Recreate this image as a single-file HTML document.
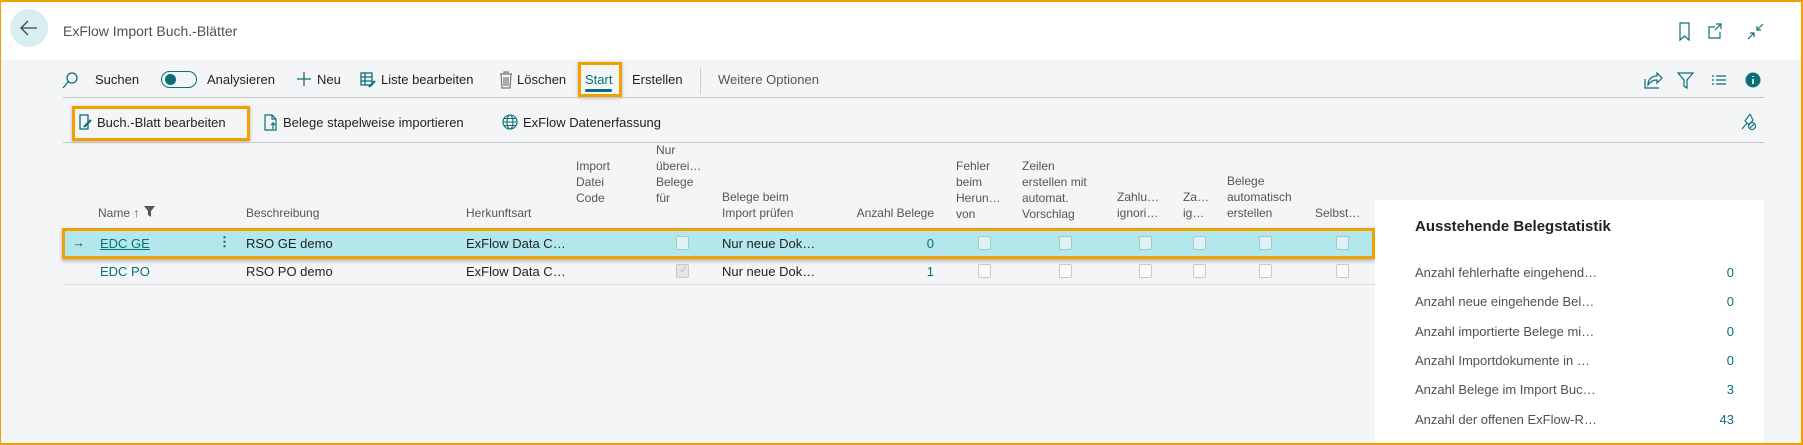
<!DOCTYPE html>
<html><head><meta charset="utf-8"><style>
*{margin:0;padding:0;box-sizing:border-box}
body{width:1803px;height:445px;overflow:hidden;background:#f4f5f7;font-family:"Liberation Sans",sans-serif;font-size:13px;color:#222;position:relative}
.a{position:absolute;white-space:nowrap}
.t{color:#0b6f78}
.h{color:#555;font-size:12px;line-height:16px}
.cb{position:absolute;width:13px;height:14px;border:1px solid #c8c8c8;border-radius:2px;background:#fafafa}
.r1 .cb{background:#dcf2f4;border-color:#a8c9cc}
svg{position:absolute}
</style></head><body>
<div class="a" style="left:0;top:0;width:1803px;height:60px;background:#fff"></div>
<div class="a" style="left:10px;top:9px;width:38px;height:38px;border-radius:50%;background:#d9eef0"></div>
<svg style="left:19px;top:19px" width="20" height="18" viewBox="0 0 20 18"><path d="M18 9H3M9 2L2 9l7 7" fill="none" stroke="#444" stroke-width="1.3"/></svg>
<div class="a" style="left:63px;top:23px;font-size:14px;color:#505050">ExFlow Import Buch.-Blätter</div>
<svg style="left:1678px;top:22px" width="90" height="20" viewBox="0 0 90 20" fill="none" stroke="#0b6f78" stroke-width="1.2"><path d="M2 1h9v17l-4.5-4L2 18z"/><path d="M37 5h-6v11h11v-6M38 2h5v5M43 2l-6 6"/><path d="M70 17l6-6M72 11h4v4M85 2l-6 6M79 4v4h4"/></svg>

<svg style="left:62px;top:71px" width="16" height="18" viewBox="0 0 16 18" fill="none" stroke="#0b6f78" stroke-width="1.3"><circle cx="10" cy="7" r="5"/><path d="M6 11l-5 6"/></svg>
<div class="a" style="left:95px;top:72px">Suchen</div>
<div class="a" style="left:161px;top:71px;width:36px;height:17px;border:1.5px solid #0b6f78;border-radius:9px"></div>
<div class="a" style="left:165px;top:74px;width:11px;height:11px;border-radius:50%;background:#0b6f78"></div>
<div class="a" style="left:207px;top:72px">Analysieren</div>
<svg style="left:296px;top:71px" width="16" height="16"><path d="M8 1v14M1 8h14" stroke="#0b6f78" stroke-width="1.3"/></svg>
<div class="a" style="left:317px;top:72px">Neu</div>
<svg style="left:360px;top:72px" width="16" height="16" viewBox="0 0 16 16" fill="none" stroke="#0b6f78" stroke-width="1.3"><rect x="1" y="1" width="11" height="12"/><path d="M1 5h11M1 9h11M5 1v12"/><path d="M9 15l6-6" stroke-width="2"/></svg>
<div class="a" style="left:381px;top:72px">Liste bearbeiten</div>
<svg style="left:499px;top:71px" width="14" height="18" viewBox="0 0 14 18" fill="none" stroke="#777" stroke-width="1.2"><path d="M1 3h12M5 3V1h4v2M2 3l1 14h8l1-14M5 6v9M7 6v9M9 6v9"/></svg>
<div class="a" style="left:517px;top:72px">Löschen</div>
<div class="a" style="left:578px;top:62px;width:44px;height:35px;border:3px solid #f0a000;box-shadow:0 1px 3px rgba(0,0,0,.3)"></div>
<div class="a" style="left:585px;top:72px;color:#0b6f78">Start</div>
<div class="a" style="left:585px;top:89px;width:27px;height:3px;background:#0b6f78;border-radius:2px"></div>
<div class="a" style="left:632px;top:72px">Erstellen</div>
<div class="a" style="left:700px;top:68px;width:1px;height:26px;background:#ccc"></div>
<div class="a" style="left:718px;top:72px;color:#555">Weitere Optionen</div>
<svg style="left:1644px;top:71px" width="120" height="18" viewBox="0 0 120 18" fill="none" stroke="#0b6f78" stroke-width="1.2"><path d="M1 8v9h14M4 14c0-6 4-9 9-9V2l5 5-5 5V9c-4 0-7 2-9 5z"/><path d="M34 2h15l-6 7v8l-3-2V9z"/><path d="M68 5h2M68 9h2M68 13h2M72 5h10M72 9h10M72 13h10"/><circle cx="109" cy="9" r="7.5" fill="#0b6f78" stroke="none"/><path d="M109 8v5M109 5v1" stroke="#fff" stroke-width="1.6"/></svg>
<div class="a" style="left:63px;top:97px;width:1701px;height:1px;background:#c8c8c8"></div>

<div class="a" style="left:72px;top:106px;width:178px;height:35px;border:3px solid #f0a000;box-shadow:0 1px 3px rgba(0,0,0,.3)"></div>
<svg style="left:79px;top:114px" width="14" height="16" viewBox="0 0 14 16" fill="none" stroke="#0b6f78" stroke-width="1.3"><path d="M1 1h8v14H1z"/><path d="M5 13l7-7" stroke-width="2.2"/></svg>
<div class="a" style="left:97px;top:115px">Buch.-Blatt bearbeiten</div>
<svg style="left:264px;top:114px" width="14" height="17" viewBox="0 0 14 17" fill="none" stroke="#0b6f78" stroke-width="1.2"><path d="M1 1h7l4 4v11H1z M8 1v4h4M9 15V9l-2 2M9 9l2 2"/></svg>
<div class="a" style="left:283px;top:115px">Belege stapelweise importieren</div>
<svg style="left:502px;top:114px" width="17" height="17" viewBox="0 0 17 17" fill="none" stroke="#0b6f78" stroke-width="1.1"><circle cx="8" cy="8" r="7"/><ellipse cx="8" cy="8" rx="3" ry="7"/><path d="M1 8h14M2 4.5h12M2 11.5h12"/></svg>
<div class="a" style="left:523px;top:115px">ExFlow Datenerfassung</div>
<svg style="left:1741px;top:113px" width="16" height="18" viewBox="0 0 16 18" fill="none" stroke="#0b6f78" stroke-width="1.1"><path d="M9 1l3 6-4 5-4-4 5-7M6 10l-5 6"/><circle cx="11" cy="13" r="3.5"/><path d="M9 15l4-4"/></svg>
<div class="a" style="left:63px;top:142px;width:1701px;height:1px;background:#c8c8c8"></div>

<div class="a h" style="left:98px;top:205px">Name ↑</div>
<svg style="left:144px;top:206px" width="11" height="11"><path d="M0 0h11L7 5v6L4 9V5z" fill="#555"/></svg>
<div class="a h" style="left:246px;top:205px">Beschreibung</div>
<div class="a h" style="left:466px;top:205px">Herkunftsart</div>
<div class="a h" style="left:576px;top:158px">Import<br>Datei<br>Code</div>
<div class="a h" style="left:656px;top:142px">Nur<br>überei…<br>Belege<br>für</div>
<div class="a h" style="left:722px;top:189px">Belege beim<br>Import prüfen</div>
<div class="a h" style="left:820px;top:205px;width:114px;text-align:right">Anzahl Belege</div>
<div class="a h" style="left:956px;top:158px">Fehler<br>beim<br>Herun…<br>von</div>
<div class="a h" style="left:1022px;top:158px">Zeilen<br>erstellen mit<br>automat.<br>Vorschlag</div>
<div class="a h" style="left:1117px;top:189px">Zahlu…<br>ignori…</div>
<div class="a h" style="left:1183px;top:189px">Za…<br>ig…</div>
<div class="a h" style="left:1227px;top:173px">Belege<br>automatisch<br>erstellen</div>
<div class="a h" style="left:1315px;top:205px">Selbst…</div>

<div class="a r1" style="left:62px;top:228px;width:1313px;height:31px;background:#b2e8ec;border:3px solid #f0a000;box-shadow:0 2px 4px rgba(0,0,0,.3)">
</div>
<div class="r1">
<div class="a" style="left:72px;top:235px;color:#444">→</div>
<div class="a t" style="left:100px;top:236px;text-decoration:underline">EDC GE</div>
<div class="a" style="left:218px;top:234px;font-weight:bold;color:#444">⋮</div>
<div class="a" style="left:246px;top:236px">RSO GE demo</div>
<div class="a" style="left:466px;top:236px">ExFlow Data C…</div>
<div class="cb" style="left:676px;top:236px"></div>
<div class="a" style="left:722px;top:236px">Nur neue Dok…</div>
<div class="a t" style="left:880px;top:236px;width:54px;text-align:right">0</div>
<div class="cb" style="left:978px;top:236px"></div><div class="cb" style="left:1059px;top:236px"></div><div class="cb" style="left:1139px;top:236px"></div><div class="cb" style="left:1193px;top:236px"></div><div class="cb" style="left:1259px;top:236px"></div><div class="cb" style="left:1336px;top:236px"></div>
</div>
<div class="a t" style="left:100px;top:264px">EDC PO</div>
<div class="a" style="left:246px;top:264px">RSO PO demo</div>
<div class="a" style="left:466px;top:264px">ExFlow Data C…</div>
<div class="cb" style="left:676px;top:264px;background:#e6e6e6"></div>
<div class="a" style="left:679px;top:263px;color:#bbb;font-size:11px">✓</div>
<div class="a" style="left:722px;top:264px">Nur neue Dok…</div>
<div class="a t" style="left:880px;top:264px;width:54px;text-align:right">1</div>
<div class="cb" style="left:978px;top:264px"></div><div class="cb" style="left:1059px;top:264px"></div><div class="cb" style="left:1139px;top:264px"></div><div class="cb" style="left:1193px;top:264px"></div><div class="cb" style="left:1259px;top:264px"></div><div class="cb" style="left:1336px;top:264px"></div>
<div class="a" style="left:63px;top:284px;width:1312px;height:1px;background:#dcdcdc"></div>

<div class="a" style="left:1375px;top:200px;width:389px;height:245px;background:#fff"></div>
<div class="a" style="left:1415px;top:218px;font-size:15px;font-weight:bold;color:#222">Ausstehende Belegstatistik</div>
<div class="a" style="left:1415px;top:265px;color:#505050">Anzahl fehlerhafte eingehend…</div><div class="a t" style="left:1700px;top:265px;width:34px;text-align:right">0</div>
<div class="a" style="left:1415px;top:294px;color:#505050">Anzahl neue eingehende Bel…</div><div class="a t" style="left:1700px;top:294px;width:34px;text-align:right">0</div>
<div class="a" style="left:1415px;top:324px;color:#505050">Anzahl importierte Belege mi…</div><div class="a t" style="left:1700px;top:324px;width:34px;text-align:right">0</div>
<div class="a" style="left:1415px;top:353px;color:#505050">Anzahl Importdokumente in …</div><div class="a t" style="left:1700px;top:353px;width:34px;text-align:right">0</div>
<div class="a" style="left:1415px;top:382px;color:#505050">Anzahl Belege im Import Buc…</div><div class="a t" style="left:1700px;top:382px;width:34px;text-align:right">3</div>
<div class="a" style="left:1415px;top:412px;color:#505050">Anzahl der offenen ExFlow-R…</div><div class="a t" style="left:1700px;top:412px;width:34px;text-align:right">43</div>

<div class="a" style="left:0;top:0;width:1803px;height:445px;border:2px solid #f0a000;border-left-width:1px"></div>
</body></html>
